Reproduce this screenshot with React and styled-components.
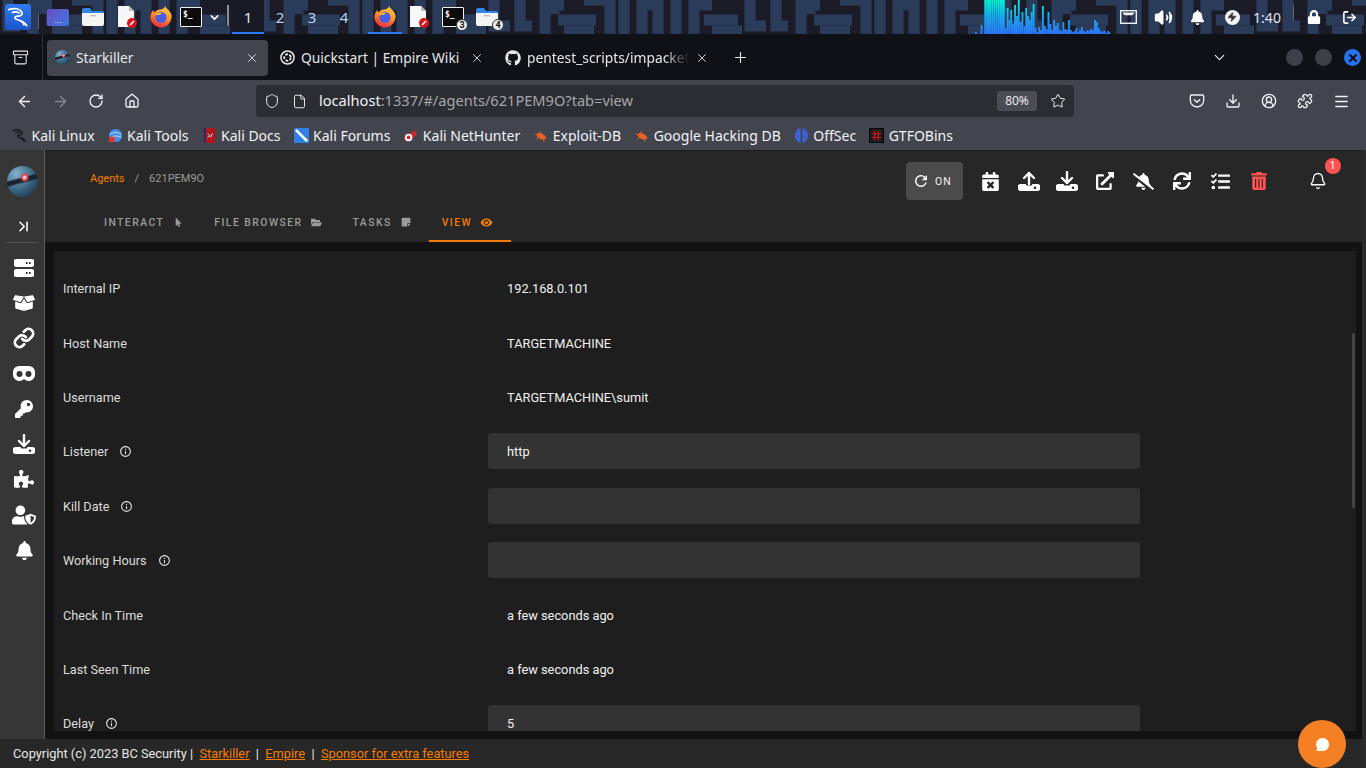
import React from 'react'
import styled, { createGlobalStyle } from 'styled-components'
import {
  FaBoxOpen, FaKey, FaPuzzlePiece, FaUserShield, FaBell,
  FaCalendarTimes, FaExternalLinkAlt, FaBellSlash, FaSync, FaTasks, FaTrashAlt, FaMousePointer,
  FaFolderOpen, FaStickyNote, FaGithub, FaLock,
} from 'react-icons/fa'
import { MdInfoOutline, MdRefresh, MdRemoveRedEye } from 'react-icons/md'
import {
  ArrowLeft, ArrowRight, RotateCw, Home, Shield, File, Star, Download, CircleUserRound, Puzzle, Menu,
  ChevronDown, ChevronLast, X, Plus, Archive, Pocket, LogOut, Volume2, Zap, Link, Bell,
} from 'lucide-react'

const GlobalStyle = createGlobalStyle`
  html, body { margin: 0; padding: 0; height: 100%; background: #121212; overflow: hidden; }
  * { box-sizing: border-box; }
`

const uiFont = `"Noto Sans", "Liberation Sans", sans-serif`
const pageFont = `Roboto, "Liberation Sans", sans-serif`
const orange = '#f57c00'

const Screen = styled.div`
  position: relative;
  width: 100%;
  height: 100vh;
  display: flex;
  flex-direction: column;
  overflow: hidden;
  font-family: ${pageFont};
`

/* desktop panel */
const Panel = styled.div`
  position: relative;
  height: 35px;
  flex: none;
  display: flex;
  align-items: stretch;
  background: #1a1b26;
  border-bottom: 1px solid #10121a;
`
const Wallpaper = styled.svg`
  position: absolute;
  inset: 0;
  width: 100%;
  height: 100%;
`
const Slot = styled.div`
  position: relative;
  flex: none;
  width: ${(p) => p.$w}px;
  margin-left: ${(p) => p.$ml || 0}px;
  display: flex;
  align-items: center;
  justify-content: center;
  color: #fff;
  &::after {
    content: '';
    display: ${(p) => (p.$active ? 'block' : 'none')};
    position: absolute;
    left: 0;
    right: 0;
    bottom: 0;
    height: 2px;
    background: #2777ff;
  }
`
const PanelSep = styled.div`
  flex: none;
  width: 2px;
  margin: 5px 1px 5px ${(p) => p.$ml || 1}px;
  background: #8b8f98;
`
const Workspace = styled(Slot)`
  font-family: ${uiFont};
  font-size: 15px;
  color: ${(p) => (p.$active ? '#dfe6f2' : '#b9d3ef')};
  background: ${(p) => (p.$active ? '#171a24' : 'transparent')};
`
const Clock = styled(Slot)`
  font-family: ${uiFont};
  font-size: 14px;
  color: #e3e7ee;
`
const KaliTile = styled.div`
  width: 26px;
  height: 26px;
  border-radius: 3px;
  background: linear-gradient(180deg, #2f7bf0, #1c55c9);
  display: flex;
  align-items: center;
  justify-content: center;
  color: #fff;
`
const Launcher = styled.div`
  width: 22px;
  height: 17px;
  border-radius: 2px;
  background: linear-gradient(135deg, #6a4fc4, #3f74e0);
  color: #fff;
  font-size: 9px;
  line-height: 22px;
  text-align: center;
  font-family: ${pageFont};
`
const TerminalTile = styled.div`
  position: relative;
  width: 22px;
  height: 20px;
  background: #0c0c0c;
  border: 1px solid #f0f0f0;
  border-radius: 1px;
  color: #fff;
  font-family: "DejaVu Sans Mono", monospace;
  font-size: 8px;
  font-weight: 700;
  padding: 2px 0 0 2px;
  line-height: 9px;
`
const CountBadge = styled.span`
  position: absolute;
  right: ${(p) => p.$r}px;
  bottom: ${(p) => p.$b}px;
  width: 12px;
  height: 12px;
  border-radius: 50%;
  background: #eee;
  border: 1px solid #333;
  color: #111;
  font-family: ${pageFont};
  font-size: 9px;
  font-weight: 700;
  line-height: 10px;
  text-align: center;
`
const BoltDisc = styled.div`
  width: 15px;
  height: 15px;
  border-radius: 50%;
  background: #f2f2f2;
  display: flex;
  align-items: center;
  justify-content: center;
`

const Dragon = ({ size, color }) => (
  <svg width={size} height={size} viewBox="0 0 24 24" fill="none" stroke={color} strokeWidth="1.900" strokeLinecap="round">
    <path d="M2 4c6-2.500 12-1 14 2.500 1.500 3-1 4.500-4.500 4.500-3 0-4 2-1.500 3.500 4 1.500 9 2 11.500 7" />
    <path d="M6 7c3-1 5-1 7 .5M15 16.500c2 .5 3 2 3.500 4" />
  </svg>
)
const FolderIcon = () => (
  <svg width="22" height="18" viewBox="0 0 22 18">
    <path d="M0 2a2 2 0 0 1 2-2h6l2 3h10a2 2 0 0 1 2 2v1H0z" fill="#2f86e8" />
    <path d="M0 5h22v11a2 2 0 0 1-2 2H2a2 2 0 0 1-2-2z" fill="#f4f4f4" />
    <rect x="8" y="7" width="6" height="1.400" fill="#bbb" />
  </svg>
)
const DocIcon = () => (
  <svg width="20" height="22" viewBox="0 0 20 22">
    <path d="M1 0h11l5 5v16H1z" fill="#f7f7f7" />
    <path d="M12 0l5 5h-5z" fill="#bbb" />
    <circle cx="15" cy="17" r="5" fill="#d3141c" />
    <path d="M13 19l4-4" stroke="#fff" strokeWidth="1.600" />
  </svg>
)
const FirefoxIcon = () => (
  <svg width="22" height="22" viewBox="0 0 22 22">
    <defs>
      <linearGradient id="ffo" x1="0.7" y1="0" x2="0.3" y2="1">
        <stop offset="0" stopColor="#ffd43a" />
        <stop offset="0.5" stopColor="#ff8a2a" />
        <stop offset="1" stopColor="#e8253f" />
      </linearGradient>
    </defs>
    <path d="M15 0c1 3 5 4 6.500 9 1 6-4 12.500-10.500 12.500S0 16 .5 10.500C1 7 2 5 3.500 4c0 1 .5 2 1.200 2.500C6 4 9 3 11 3.500 13 3 15 2 15 0z" fill="url(#ffo)" />
    <circle cx="11" cy="11.500" r="5.500" fill="#4a5fe0" />
    <path d="M5 9c2-2 5-2.500 8-1.500-1.500 0-3 .5-3.500 1.500z" fill="#ffb52e" />
  </svg>
)
const ServerIcon = () => (
  <svg width="20" height="18" viewBox="0 0 20 18" fill="#fff">
    <path fillRule="evenodd" d="M3 0h14a3 3 0 0 1 0 8H3a3 3 0 0 1 0-8zM12 3v2h1.600V3zm3 0v2h1.600V3z" />
    <path fillRule="evenodd" d="M3 10h14a3 3 0 0 1 0 8H3a3 3 0 0 1 0-8zm9 3v2h1.600v-2zm3 0v2h1.600v-2z" />
  </svg>
)
const GogglesIcon = () => (
  <svg width="22" height="15" viewBox="0 0 22 15" fill="#fff">
    <path fillRule="evenodd" d="M6 0h10a6 6 0 0 1 6 6v2.500a6.500 6.500 0 0 1-11 4.600A6.500 6.500 0 0 1 0 8.500V6a6 6 0 0 1 6-6zm.5 5a3 3 0 1 0 0 6 3 3 0 0 0 0-6zm9 0a3 3 0 1 0 0 6 3 3 0 0 0 0-6z" />
  </svg>
)
const TrayArrow = ({ up }) => (
  <svg width="22" height="20" viewBox="0 0 22 20" fill="#fff">
    <path fillRule="evenodd" d="M3 13h4.500l1 1.500h5l1-1.500H19a3 3 0 0 1 0 7H3a3 3 0 0 1 0-7zm14 2.500a1.300 1.300 0 1 0 0 2.600 1.300 1.300 0 0 0 0-2.600z" />
    <path
      d={up ? 'M11 13V2M6 7l5-5 5 5' : 'M11 1v11M6 7l5 5 5-5'}
      fill="none"
      stroke="#fff"
      strokeWidth="2.400"
      strokeLinecap="round"
      strokeLinejoin="round"
    />
  </svg>
)
const LogoGlobe = styled.div`
  width: ${(p) => p.$s}px;
  height: ${(p) => p.$s}px;
  flex: none;
  border-radius: 50%;
  background:
    radial-gradient(circle at 57% 37%, #ffc2c8 0 5%, #e03a4e 10%, transparent 19%),
    linear-gradient(165deg, transparent 38%, #16222c 42% 50%, transparent 56%),
    radial-gradient(circle at 30% 25%, #7fb0cc, #36617c 55%, #16242f 100%);
`

/* browser chrome */
const TabBar = styled.div`
  height: 45px;
  flex: none;
  display: flex;
  align-items: center;
  background: #0f1117;
  color: #e6e7ea;
  font-family: ${uiFont};
  font-size: 13.800px;
`
const TabsButton = styled.div`
  width: 43px;
  height: 100%;
  flex: none;
  padding-right: 2px;
  display: flex;
  align-items: center;
  justify-content: center;
  border-right: 1px solid #2e3036;
  margin-right: 4px;
`
const BrowserTab = styled.div`
  width: 221px;
  height: 36px;
  margin-right: 4px;
  flex: none;
  padding: 0 9px 0 8px;
  display: flex;
  align-items: center;
  gap: 6px;
  border-radius: 4px;
  background: ${(p) => (p.$active ? '#42454e' : 'transparent')};
`
const TabTitle = styled.span`
  flex: 1;
  white-space: nowrap;
  overflow: hidden;
  mask-image: ${(p) => (p.$fade ? 'linear-gradient(90deg, #000 85%, transparent)' : 'none')};
`
const WindowDot = styled.div`
  width: 17px;
  height: 17px;
  margin-left: ${(p) => p.$ml || 12}px;
  border-radius: 50%;
  flex: none;
  display: flex;
  align-items: center;
  justify-content: center;
  background: ${(p) => (p.$close ? '#2672ec' : '#3d4048')};
  color: #0d0f14;
`
const NavBar = styled.div`
  height: 42px;
  flex: none;
  padding-left: 6px;
  display: flex;
  align-items: center;
  background: #42454e;
  color: #f2f2f4;
`
const NavButton = styled.div`
  width: ${(p) => p.$w || 36}px;
  margin-left: ${(p) => p.$ml || 0}px;
  flex: none;
  display: flex;
  justify-content: center;
  color: ${(p) => (p.$dim ? '#85878e' : '#f2f2f4')};
`
const UrlBar = styled.div`
  width: 818px;
  height: 32px;
  margin-left: 106px;
  margin-right: 105px;
  flex: none;
  display: flex;
  align-items: center;
  padding: 0 6px 0 7px;
  border-radius: 4px;
  background: #2c2d33;
`
const UrlText = styled.div`
  flex: 1;
  margin-left: 2px;
  padding-bottom: 3px;
  font-family: ${uiFont};
  font-size: 14.600px;
  color: #a5a6ab;
  b { font-weight: 400; color: #f2f2f4; }
`
const ZoomPill = styled.div`
  width: 40px;
  height: 20px;
  margin-right: 11px;
  border-radius: 3px;
  background: #4b4c54;
  font-family: ${uiFont};
  font-size: 12px;
  line-height: 20px;
  text-align: center;
  color: #e8e8ea;
`
const Bookmarks = styled.div`
  height: 28px;
  flex: none;
  display: flex;
  align-items: center;
  gap: 13px;
  padding: 0 0 2px 12px;
  background: #42454e;
  color: #f2f2f4;
  font-family: ${uiFont};
  font-size: 14px;
`
const Bookmark = styled.div`
  display: flex;
  align-items: center;
  gap: 4.500px;
  white-space: nowrap;
`
const Fav = styled.svg`
  flex: none;
  width: 15px;
  height: 15px;
`

/* starkiller page */
const Page = styled.div`
  flex: 1;
  min-height: 0;
  display: flex;
  flex-direction: column;
  background: #121212;
  color: #e4e4e4;
`
const Body = styled.div`
  flex: 1;
  min-height: 0;
  display: flex;
`
const Rail = styled.nav`
  width: 45px;
  flex: none;
  display: flex;
  flex-direction: column;
  align-items: center;
  padding-top: 16px;
  background: #363636;
  border-right: 1px solid #5c5c5c;
  color: #fff;
`
const RailToggle = styled.div`
  width: 32px;
  height: 46px;
  padding: 14px 0 0 3px;
  display: flex;
  align-items: center;
  justify-content: center;
  border-bottom: 1px solid #555;
  color: #fff;
`
const RailList = styled.div`
  margin-top: 7px;
  padding-left: 4px;
  display: flex;
  flex-direction: column;
  align-items: center;
`
const RailIcon = styled.div`
  height: 35.300px;
  display: flex;
  align-items: center;
  justify-content: center;
`
const Main = styled.main`
  flex: 1;
  min-width: 0;
  display: flex;
  flex-direction: column;
`
const Header = styled.header`
  height: 92px;
  flex: none;
  background: #272727;
  border-top: 1px solid #1b1b1b;
  display: flex;
  flex-direction: column;
`
const HeaderRow = styled.div`
  height: 53px;
  flex: none;
  padding: 11px 0 0 45px;
  display: flex;
  align-items: flex-start;
`
const Crumbs = styled.div`
  flex: none;
  width: 816px;
  height: 38px;
  display: flex;
  align-items: center;
  gap: 10px;
  padding-bottom: 6px;
  font-size: 11px;
  color: #9a9a9a;
  a { color: ${orange}; }
`
const RefreshToggle = styled.div`
  width: 57px;
  height: 38px;
  flex: none;
  margin-right: 8px;
  padding-left: 6px;
  display: flex;
  align-items: center;
  gap: 5px;
  border-radius: 4px;
  background: #4b4b4b;
  color: #f2f2f2;
  font-size: 10.500px;
  letter-spacing: 1.100px;
`
const ActionIcon = styled.div`
  width: 38.400px;
  height: 38px;
  flex: none;
  display: flex;
  align-items: center;
  justify-content: center;
  color: ${(p) => (p.$danger ? '#ff5252' : '#fff')};
`
const BellWrap = styled(ActionIcon)`
  position: relative;
  margin-left: 21px;
`
const Badge = styled.span`
  position: absolute;
  top: -4px;
  right: -3px;
  width: 16px;
  height: 16px;
  border-radius: 50%;
  background: #ff5252;
  color: #fff;
  font-size: 10px;
  line-height: 16px;
  text-align: center;
`
const TabsRow = styled.div`
  height: 38px;
  flex: none;
  padding-left: 46px;
  display: flex;
`
const PageTab = styled.div`
  flex: none;
  padding: 0 18px 0 13px;
  display: flex;
  align-items: center;
  gap: ${(p) => p.$gap}px;
  font-size: 10.400px;
  font-weight: 500;
  letter-spacing: 1.450px;
  text-transform: uppercase;
  color: ${(p) => (p.$active ? orange : '#9b9b9b')};
  border-bottom: 2px solid ${(p) => (p.$active ? orange : 'transparent')};
`
const Content = styled.section`
  flex: 1;
  min-height: 0;
  padding: 9px 10px 8px 9px;
`
const Card = styled.div`
  position: relative;
  height: 100%;
  padding-top: 10.100px;
  overflow: hidden;
  background: #1e1e1e;
`
const Thumb = styled.div`
  position: absolute;
  top: 82px;
  right: 1px;
  width: 3px;
  height: 175px;
  border-radius: 2px;
  background: #444;
`
const Row = styled.div`
  height: 54.400px;
  display: grid;
  grid-template-columns: 434px 652px;
  align-items: center;
  font-size: 12.800px;
`
const Label = styled.div`
  padding: 0.9px 0 0 9px;
  display: flex;
  align-items: center;
  gap: 11px;
  font-size: 12.700px;
  color: #dcdcdc;
`
const Value = styled.div`
  height: 36px;
  padding: 0.9px 0 0 19px;
  display: flex;
  align-items: center;
  border-radius: 4px;
  background: ${(p) => (p.$field ? '#333' : 'transparent')};
  color: #f0f0f0;
`
const Footer = styled.footer`
  height: 29px;
  flex: none;
  padding-left: 13px;
  display: flex;
  align-items: center;
  background: #272727;
  font-size: 12.800px;
  color: #e6e6e6;
  white-space: pre;
  a { color: ${orange}; text-decoration: underline; }
`
const PageScroll = styled.div`
  position: absolute;
  top: 150px;
  right: 0;
  bottom: 0;
  width: 4px;
  background: #2a2a2a;
`
const ChatButton = styled.div`
  position: absolute;
  right: 20px;
  bottom: 0;
  width: 48px;
  height: 48px;
  border-radius: 50%;
  background: #f58023;
  display: flex;
  align-items: center;
  justify-content: center;
`

const maze = [
  'M8 0V26H20', 'M42 0V14', 'M33 36V5H52', 'M46 20H84', 'M52 31H82', 'M72 0H98V36', 'M112 0V36',
  'M130 36V5H146V36', 'M164 0V36', 'M182 36V5H200', 'M192 20H226', 'M200 31H230', 'M238 0V26H254',
]
const eqBars = [2, 0, 0, 9, 0, 34, 34, 34, 34, 34, 34, 34, 34, 34, 34, 34, 6, 26, 14, 24, 10, 29, 18, 34, 12, 22, 8, 26, 18, 14, 22, 30, 6, 2, 7, 4, 28, 8, 5, 22, 10, 4, 14, 8, 11, 4, 3, 12, 5, 4, 14, 4, 2, 3, 6, 2, 4, 7, 3, 2, 4, 3, 5, 4, 14, 12, 6, 3, 2, 3, 1, 3, 2]

const sideIcons = [
  <ServerIcon />,
  <FaBoxOpen size={22} />,
  <Link size={22} strokeWidth={3} />,
  <GogglesIcon />,
  <FaKey size={18} />,
  <TrayArrow />,
  <FaPuzzlePiece size={20} />,
  <FaUserShield size={24} />,
  <FaBell size={19} />,
]
const actionIcons = [
  <FaCalendarTimes size={19} />,
  <TrayArrow up />,
  <TrayArrow />,
  <FaExternalLinkAlt size={18} />,
  <FaBellSlash size={21} />,
  <FaSync size={18} />,
  <FaTasks size={19} />,
]

const rows = [
  { label: 'Internal IP', value: '192.168.0.101' },
  { label: 'Host Name', value: 'TARGETMACHINE' },
  { label: 'Username', value: 'TARGETMACHINE\\sumit' },
  { label: 'Listener', value: 'http', info: true, field: true },
  { label: 'Kill Date', value: '', info: true, field: true },
  { label: 'Working Hours', value: '', info: true, field: true },
  { label: 'Check In Time', value: 'a few seconds ago' },
  { label: 'Last Seen Time', value: 'a few seconds ago' },
  { label: 'Delay', value: '5', info: true, field: true },
]

const RoachFav = () => (
  <Fav viewBox="0 0 16 16">
    <ellipse cx="9" cy="9" rx="5.500" ry="3" fill="#e8622a" transform="rotate(25 9 9)" />
    <path d="M1 6l5 2M3 12l4-2M7 3l2 4M12 15l-2-4" stroke="#d8541f" strokeWidth="1" />
  </Fav>
)

function App() {
  return (
    <Screen>
      <GlobalStyle />
      <Panel>
        <Wallpaper preserveAspectRatio="none">
          <defs>
            <pattern id="maze" width="256" height="36" patternUnits="userSpaceOnUse">
              <g fill="none" stroke="#2a3c5a" strokeWidth="11">
                {maze.map((d) => <path key={d} d={d} />)}
              </g>
            </pattern>
          </defs>
          <rect width="100%" height="100%" fill="url(#maze)" />
        </Wallpaper>
        <Slot $w={36}><KaliTile><Dragon size={22} color="#fff" /></KaliTile></Slot>
        <PanelSep />
        <Slot $w={36}><Launcher>...</Launcher></Slot>
        <Slot $w={34}><FolderIcon /></Slot>
        <Slot $w={34}><DocIcon /></Slot>
        <Slot $w={34}><FirefoxIcon /></Slot>
        <Slot $w={26}><TerminalTile>$_</TerminalTile></Slot>
        <Slot $w={20}><ChevronDown size={13} strokeWidth={3} /></Slot>
        <PanelSep $ml={3} />
        <Workspace $w={32} $active $ml={2}>1</Workspace>
        <Workspace $w={32}>2</Workspace>
        <Workspace $w={32}>3</Workspace>
        <Workspace $w={32}>4</Workspace>
        <PanelSep $ml={3} />
        <Slot $w={34} $active $ml={2}><FirefoxIcon /></Slot>
        <Slot $w={34}><DocIcon /></Slot>
        <Slot $w={34}><TerminalTile>$_</TerminalTile><CountBadge $r={2} $b={3}>3</CountBadge></Slot>
        <Slot $w={34}><FolderIcon /><CountBadge $r={0} $b={3}>4</CountBadge></Slot>
        <Slot $w={135} $ml={471}>
          <svg width="135" height="34" viewBox="0 0 135 34">
            <defs>
              <linearGradient id="eq" x1="0" y1="0" x2="0" y2="34" gradientUnits="userSpaceOnUse">
                <stop offset="0" stopColor="#00f5d4" />
                <stop offset="0.5" stopColor="#18a8ee" />
                <stop offset="1" stopColor="#2a78ff" />
              </linearGradient>
            </defs>
            {eqBars.map((h, i) => (
              <rect key={i} x={i * 1.86} y={34 - h} width="1.900" height={h} fill="url(#eq)" />
            ))}
          </svg>
        </Slot>
        <Slot $w={36}>
          <svg width="17" height="14" viewBox="0 0 17 14">
            <rect x=".7" y=".7" width="15.600" height="12.600" fill="none" stroke="#eef1f5" strokeWidth="1.400" />
            <path d="M3 2.500h11v1.800h-1.500v1h-8v-1H3z" fill="#eef1f5" />
          </svg>
        </Slot>
        <Slot $w={34}><Volume2 size={19} fill="#fff" /></Slot>
        <Slot $w={35}><FaBell size={15} /></Slot>
        <Slot $w={34}><BoltDisc><Zap size={10} color="#333" fill="#333" /></BoltDisc></Slot>
        <Clock $w={36}>1:40</Clock>
        <PanelSep $ml={7} />
        <Slot $w={38}><FaLock size={14} /></Slot>
        <Slot $w={32}><LogOut size={15} strokeWidth={2.500} /></Slot>
      </Panel>

      <TabBar>
        <TabsButton><Archive size={17} strokeWidth={1.500} /></TabsButton>
        <BrowserTab $active>
          <LogoGlobe $s={15} />
          <TabTitle>Starkiller</TabTitle>
          <X size={14} strokeWidth={1.500} />
        </BrowserTab>
        <BrowserTab>
          <svg width="15" height="15" viewBox="0 0 16 16">
            <circle cx="8" cy="8" r="7" fill="none" stroke="#e8e8e8" strokeWidth="1.600" />
            <circle cx="8" cy="8" r="3.500" fill="none" stroke="#e8e8e8" strokeWidth="2" strokeDasharray="3 1.500" />
          </svg>
          <TabTitle>Quickstart | Empire Wiki</TabTitle>
          <X size={14} strokeWidth={1.500} />
        </BrowserTab>
        <BrowserTab>
          <FaGithub size={16} />
          <TabTitle $fade>pentest_scripts/impacket</TabTitle>
          <X size={14} strokeWidth={1.500} />
        </BrowserTab>
        <NavButton><Plus size={17} strokeWidth={1.500} /></NavButton>
        <NavButton $ml={443}><ChevronDown size={17} strokeWidth={1.500} /></NavButton>
        <WindowDot $ml={49} />
        <WindowDot />
        <WindowDot $close><X size={12} strokeWidth={4} /></WindowDot>
      </TabBar>

      <NavBar>
        <NavButton><ArrowLeft size={17} /></NavButton>
        <NavButton $dim><ArrowRight size={17} /></NavButton>
        <NavButton><RotateCw size={16} /></NavButton>
        <NavButton><Home size={16} /></NavButton>
        <UrlBar>
          <NavButton $w={18}><Shield size={16} strokeWidth={1.500} /></NavButton>
          <NavButton><File size={15} strokeWidth={1.500} /></NavButton>
          <UrlText><b>localhost</b>:1337/#/agents/621PEM9O?tab=view</UrlText>
          <ZoomPill>80%</ZoomPill>
          <NavButton $w={20}><Star size={16} strokeWidth={1.500} /></NavButton>
        </UrlBar>
        <NavButton><Pocket size={16} /></NavButton>
        <NavButton><Download size={16} /></NavButton>
        <NavButton><CircleUserRound size={16} /></NavButton>
        <NavButton><Puzzle size={16} /></NavButton>
        <NavButton><Menu size={17} /></NavButton>
      </NavBar>

      <Bookmarks>
        <Bookmark><Dragon size={15} color="#111" />Kali Linux</Bookmark>
        <Bookmark>
          <Fav viewBox="0 0 16 16"><circle cx="8" cy="8" r="7" fill="#3f8fe6" /><path d="M2 7c4-3 8-3 12 0M3 10c3-2 7-2 11 0" stroke="#cfe4fa" fill="none" /><rect x="1" y="9" width="6" height="6" rx="1" fill="#e5352b" /></Fav>
          Kali Tools
        </Bookmark>
        <Bookmark>
          <Fav viewBox="0 0 16 16"><rect x="2" width="12" height="16" fill="#b3161b" /><rect x="2" width="2" height="16" fill="#1d2f6b" /><path d="M6 6l2 2-2 2M11 6L9 10" stroke="#fff" fill="none" /></Fav>
          Kali Docs
        </Bookmark>
        <Bookmark>
          <Fav viewBox="0 0 16 16"><rect width="16" height="16" fill="#2f7fe6" /><path d="M2 2l12 12" stroke="#fff" strokeWidth="3" /></Fav>
          Kali Forums
        </Bookmark>
        <Bookmark>
          <Fav viewBox="0 0 16 16"><path d="M0 10L14 2v6L4 15z" fill="#d4272e" /><circle cx="6" cy="10" r="3" fill="none" stroke="#fff" strokeWidth="2" /></Fav>
          Kali NetHunter
        </Bookmark>
        <Bookmark><RoachFav />Exploit-DB</Bookmark>
        <Bookmark><RoachFav />Google Hacking DB</Bookmark>
        <Bookmark>
          <Fav viewBox="0 0 16 16"><ellipse cx="8" cy="8" rx="7" ry="8" fill="#3b62d8" /><rect x="7" width="2" height="16" fill="#42454e" /></Fav>
          OffSec
        </Bookmark>
        <Bookmark>
          <Fav viewBox="0 0 16 16"><rect x=".5" y=".5" width="15" height="15" fill="#1c1c1c" stroke="#000" /><path d="M6 3v10M10 3v10M3 6h10M3 10h10" stroke="#b8141a" strokeWidth="1.500" /></Fav>
          GTFOBins
        </Bookmark>
      </Bookmarks>

      <Page>
        <Body>
          <Rail>
            <LogoGlobe $s={31} />
            <RailToggle><ChevronLast size={17} strokeWidth={2.200} /></RailToggle>
            <RailList>
              {sideIcons.map((icon, i) => (
                <RailIcon key={i}>{icon}</RailIcon>
              ))}
            </RailList>
          </Rail>
          <Main>
            <Header>
              <HeaderRow>
                <Crumbs><a>Agents</a><span>/</span><span>621PEM9O</span></Crumbs>
                <RefreshToggle><MdRefresh size={18} />ON</RefreshToggle>
                {actionIcons.map((icon, i) => (
                  <ActionIcon key={i}>{icon}</ActionIcon>
                ))}
                <ActionIcon $danger><FaTrashAlt size={18} /></ActionIcon>
                <BellWrap>
                  <Bell size={18} strokeWidth={1.800} />
                  <Badge>1</Badge>
                </BellWrap>
              </HeaderRow>
              <TabsRow>
                <PageTab $gap={10}>Interact <FaMousePointer size={9} /></PageTab>
                <PageTab $gap={8}>File Browser <FaFolderOpen size={11} /></PageTab>
                <PageTab $gap={9}>Tasks <FaStickyNote size={10} /></PageTab>
                <PageTab $active $gap={8}>View <MdRemoveRedEye size={13} /></PageTab>
              </TabsRow>
            </Header>
            <Content>
              <Card>
                {rows.map((r) => (
                  <Row key={r.label}>
                    <Label>{r.label}{r.info && <MdInfoOutline size={13} />}</Label>
                    <Value $field={r.field}>{r.value}</Value>
                  </Row>
                ))}
                <Thumb />
              </Card>
            </Content>
          </Main>
        </Body>
        <Footer>
          Copyright (c) 2023 BC Security |  <a>Starkiller</a>  |  <a>Empire</a>  |  <a>Sponsor for extra features</a>
        </Footer>
      </Page>
      <PageScroll />
      <ChatButton>
        <svg width="17" height="17" viewBox="0 0 18 18">
          <path d="M9 2a7 7 0 1 1 0 14H2.500l1-3A7 7 0 0 1 9 2z" fill="#fff" />
        </svg>
      </ChatButton>
    </Screen>
  )
}

export default App
